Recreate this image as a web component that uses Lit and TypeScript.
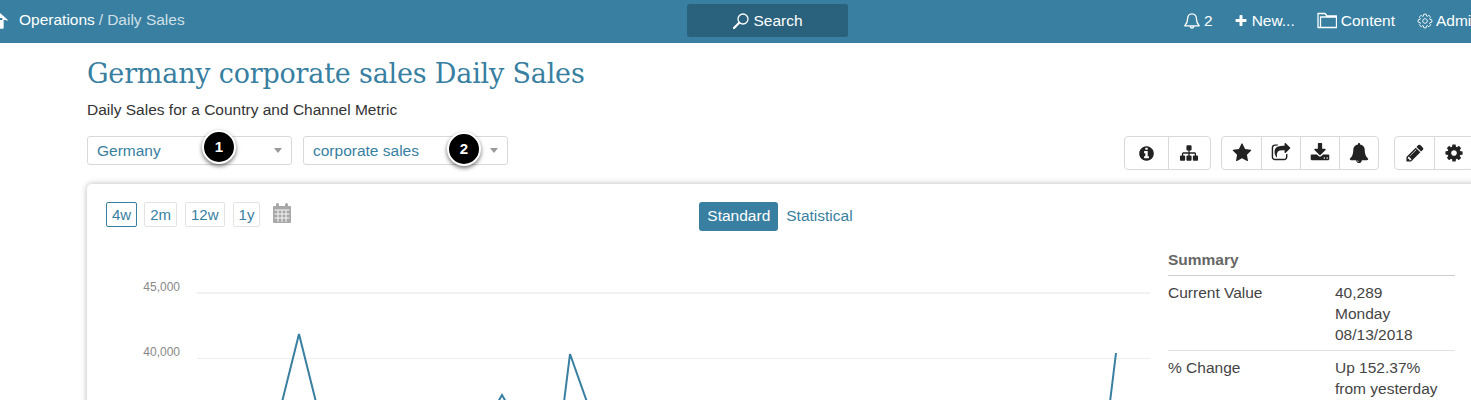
import { LitElement, html, css, svg } from "lit";
import { customElement } from "lit/decorators.js";

const fa = (d: string, size: number, cls = "") => html`<svg class="fa ${cls}" width=${size} height=${size} viewBox="0 0 1792 1792" fill="currentColor"><path d=${d}></path></svg>`;

const INFO = "M1152 1376v-160q0-14-9-23t-23-9h-96v-512q0-14-9-23t-23-9h-320q-14 0-23 9t-9 23v160q0 14 9 23t23 9h96v320h-96q-14 0-23 9t-9 23v160q0 14 9 23t23 9h448q14 0 23-9t9-23zm-128-896v-160q0-14-9-23t-23-9h-192q-14 0-23 9t-9 23v160q0 14 9 23t23 9h192q14 0 23-9t9-23zm640 416q0 209-103 385.500t-279.500 279.500-385.500 103-385.500-103-279.500-279.500-103-385.500 103-385.500 279.500-279.500 385.500-103 385.500 103 279.500 279.500 103 385.500z";
const SITEMAP = "M1792 1248v320q0 40-28 68t-68 28h-320q-40 0-68-28t-28-68v-320q0-40 28-68t68-28h96v-192h-512v192h96q40 0 68 28t28 68v320q0 40-28 68t-68 28h-320q-40 0-68-28t-28-68v-320q0-40 28-68t68-28h96v-192h-512v192h96q40 0 68 28t28 68v320q0 40-28 68t-68 28h-320q-40 0-68-28t-28-68v-320q0-40 28-68t68-28h96v-192q0-52 38-90t90-38h512v-192h-96q-40 0-68-28t-28-68v-320q0-40 28-68t68-28h320q40 0 68 28t28 68v320q0 40-28 68t-68 28h-96v192h512q52 0 90 38t38 90v192h96q40 0 68 28t28 68z";
const STAR = "M1728 647q0 22-26 48l-363 354 86 500q1 7 1 20 0 21-10.500 35.500t-30.500 14.500q-19 0-40-12l-449-236-449 236q-22 12-40 12-21 0-31.500-14.500t-10.500-35.500q0-6 2-20l86-500-364-354q-25-27-25-48 0-37 56-46l502-73 225-455q19-41 49-41t49 41l225 455 502 73q56 9 56 46z";
const SHARE = "M1472 989v259q0 119-84.500 203.500t-203.500 84.500h-832q-119 0-203.500-84.500t-84.500-203.500v-832q0-119 84.500-203.500t203.500-84.500h255q13 0 22.500 9.500t9.500 22.500q0 27-26 32-77 26-133 60-10 4-16 4h-112q-66 0-113 47t-47 113v832q0 66 47 113t113 47h832q66 0 113-47t47-113v-214q0-19 18-29 28-13 54-37 16-16 35-8 21 9 21 29zm237-496l-384 384q-18 19-45 19-12 0-25-5-39-17-39-59v-192h-160q-323 0-438 131-119 137-74 473 3 23-20 34-8 2-12 2-16 0-26-13-10-14-21-31t-39.500-68.500-49.500-99.500-38.500-114-17.500-122q0-49 3.500-91t14-90 28-88 47-81.500 68.500-74 94.500-61.500 124.500-48.500 159.500-30.500 196.500-11h160v-192q0-42 39-59 13-5 25-5 26 0 45 19l384 384q19 19 19 45t-19 45z";
const DOWNLOAD = "M1344 1344q0-26-19-45t-45-19-45 19-19 45 19 45 45 19 45-19 19-45zm256 0q0-26-19-45t-45-19-45 19-19 45 19 45 45 19 45-19 19-45zm128-224v320q0 40-28 68t-68 28h-1472q-40 0-68-28t-28-68v-320q0-40 28-68t68-28h465l135 136q58 56 136 56t136-56l136-136h464q40 0 68 28t28 68zm-325-569q17 41-14 70l-448 448q-18 19-45 19t-45-19l-448-448q-31-29-14-70 17-39 59-39h256v-448q0-26 19-45t45-19h256q26 0 45 19t19 45v448h256q42 0 59 39z";
const BELL = "M912 1696q0-16-16-16-59 0-101.500-42.500t-42.500-101.500q0-16-16-16t-16 16q0 73 51.500 124.500t124.500 51.500q16 0 16-16zm816-288q0 52-38 90t-90 38h-448q0 106-75 181t-181 75-181-75-75-181h-448q-52 0-90-38t-38-90q50-42 91-88t85-119.500 74.500-158.500 50-206 19.500-260q0-152 117-282.500t307-158.500q-8-19-8-39 0-40 28-68t68-28 68 28 28 68q0 20-8 39 190 28 307 158.500t117 282.500q0 139 19.500 260t50 206 74.500 158.500 85 119.500 91 88z";
const PENCIL = "M491 1536l91-91-235-235-91 91v107h128v128h107zm523-928q0-22-22-22-10 0-17 7l-542 542q-7 7-7 17 0 22 22 22 10 0 17-7l542-542q7-7 7-17zm-54-192l416 416-832 832h-416v-416zm683 96q0 53-37 90l-166 166-416-416 166-165q36-38 90-38 53 0 91 38l235 234q37 39 37 91z";
const COG = "M1152 896q0-106-75-181t-181-75-181 75-75 181 75 181 181 75 181-75 75-181zm512-109v222q0 12-8 23t-20 13l-185 28q-19 54-39 91 35 50 107 138 10 12 10 25t-9 23q-27 37-99 108t-94 71q-12 0-26-9l-138-108q-44 23-91 38-16 136-29 186-7 28-36 28h-222q-14 0-24.500-8.500t-11.500-21.500l-28-184q-49-16-90-37l-141 107q-10 9-25 9-14 0-25-11-126-114-165-168-7-10-7-23 0-12 8-23 15-21 51-66.500t54-70.500q-27-50-41-99l-183-27q-13-2-21-12.500t-8-23.500v-222q0-12 8-23t19-13l186-28q14-46 39-92-40-57-107-138-10-12-10-24 0-10 9-23 26-36 98.500-107.500t94.500-71.500q13 0 26 10l138 107q44-23 91-38 16-136 29-186 7-28 36-28h222q14 0 24.500 8.500t11.500 21.500l28 184q49 16 90 37l142-107q9-9 24-9 13 0 25 10 129 119 165 170 7 8 7 22 0 12-8 23-15 21-51 66.500t-54 70.500q26 50 41 98l183 28q13 2 21 12.500t8 23.500z";
const PLUS = "M1600 736v192q0 40-28 68t-68 28h-416v416q0 40-28 68t-68 28h-192q-40 0-68-28t-28-68v-416h-416q-40 0-68-28t-28-68v-192q0-40 28-68t68-28h416v-416q0-40 28-68t68-28h192q40 0 68 28t28 68v416h416q40 0 68 28t28 68z";

const stroke = (w: number, h: number, body: unknown) => html`<svg class="fa" width=${w} height=${h} viewBox="0 0 ${w} ${h}" fill="none" stroke="currentColor" stroke-width="1.300" stroke-linejoin="round" stroke-linecap="round">${body}</svg>`;

@customElement("app-root")
export class AppRoot extends LitElement {
  static styles = css`
    :host { display: block; width: 100%; height: 400px; overflow: hidden; background: #fff; font-family: "Liberation Sans", Arial, sans-serif; font-size: 15.5px; color: #333; position: relative; }
    .fa { display: block; flex: none; }
    .top { height: 43px; background: #387fa1; color: #fff; display: grid; grid-template-columns: 687px 161px 1fr; align-items: center; }
    .crumbs { display: flex; align-items: center; margin: -4px 0 0 -12px; gap: 10px; white-space: nowrap; }
    .crumbs .sep, .crumbs .cur { color: #cfe0e8; }
    .crumbs .trail { display: flex; gap: 4px; }
    .search { height: 33px; margin-top: -2px; background: #2a617c; border-radius: 3px; display: flex; align-items: center; justify-content: center; gap: 3px; }
    .nav { display: flex; align-items: center; margin: -2px 0 0 336px; white-space: nowrap; }
    .nav .it { display: flex; align-items: center; gap: 4px; margin-right: 21px; }
    .nav .it.new { gap: 4px; margin-right: 22px; }
    .nav .it.cnt { margin-right: 22px; }
    .nav .it.admin { margin-right: 0; gap: 3px; }
    .page { width: 1520px; padding-left: 87px; box-sizing: border-box; }
    h1 { margin: 0; padding-top: 13px; font: 400 27px/36px "DejaVu Serif", serif; color: #387fa1; white-space: nowrap; letter-spacing: -0.2px; }
    .sub { margin-top: 8px; line-height: 20px; color: #333; }
    .ctrls { display: flex; align-items: flex-start; margin-top: 16px; }
    .sel { width: 205px; height: 29px; box-sizing: border-box; border: 1px solid #d9d9d9; border-radius: 3px; padding: 0 9px; display: flex; align-items: center; justify-content: space-between; color: #387fa1; margin-right: 11px; }
    .caret { width: 0; height: 0; border-left: 4.5px solid transparent; border-right: 4.5px solid transparent; border-top: 5px solid #999; }
    .groups { display: flex; margin-left: 605px; }
    .grp { display: flex; height: 34px; box-sizing: border-box; border: 1px solid #d9d9d9; border-radius: 4px; margin-right: 10px; }
    .grp.last { margin-left: 5px; }
    .btn { width: 39px; box-sizing: border-box; display: flex; align-items: center; justify-content: center; border-left: 1px solid #d9d9d9; color: #222; }
    .btn:first-child { border-left: 0; }
    .grp.wide .btn { width: 42.5px; }
    .card { margin-top: 14px; width: 1430px; height: 300px; box-sizing: border-box; padding: 18px 0 0 19px; border-radius: 5px; box-shadow: 0 0 6px rgba(0,0,0,.28); background: #fff; }
    .bar { width: 1340px; display: grid; grid-template-columns: 1fr auto 1fr; height: 29px; }
    .ranges { display: flex; gap: 8px; align-items: flex-start; }
    .rng { height: 25px; box-sizing: border-box; border: 1px solid #e3e3e3; border-radius: 2px; padding: 0 5px; display: flex; align-items: center; color: #387fa1; font-size: 15px; }
    .rng.on { border-color: #387fa1; margin-right: -1px; }
    .cal { margin: 1px 0 0 5px; color: #a8a8a8; }
    .modes { display: flex; gap: 8px; align-items: center; color: #387fa1; }
    .mode { padding-bottom: 1px; }
    .mode.on { box-sizing: border-box; background: #387fa1; color: #fff; border-radius: 3px; height: 29px; padding: 0 8px 1px; display: flex; align-items: center; }
    .body { display: grid; grid-template-columns: 1044px 287px; column-gap: 18px; margin-top: 19px; }
    .chart { display: block; }
    .chart text { font: 12px "Liberation Sans", Arial, sans-serif; fill: #888; text-anchor: end; }
    .sum { color: #444; }
    .sum h3 { margin: 0; font-size: 15.5px; font-weight: 700; line-height: 20px; padding-bottom: 5px; color: #666; border-bottom: 1px solid #ccc; }
    .row { display: grid; grid-template-columns: 167px 1fr; line-height: 21px; padding: 6px 0 5px; border-bottom: 1px solid #e3e3e3; }
    .pin { position: absolute; width: 34px; height: 34px; box-sizing: border-box; border-radius: 50%; background: #000; border: 2px solid #fff; color: #fff; font-weight: 700; font-size: 15px; padding-bottom: 1px; display: flex; align-items: center; justify-content: center; box-shadow: 0 2px 4px rgba(0,0,0,.55); }
    .p1 { left: 202px; top: 130px; }
    .p2 { left: 447px; top: 132px; }
  `;

  render() {
    return html`
      <div class="top">
        <div class="crumbs">
          ${stroke(21, 20, svg`<path d="M1 10 L10 2 L19 10 M5 8 V18 H9 V12 H12 V18 H15 V8" fill="#fff" stroke="#fff"></path>`)}
          <div class="trail"><span>Operations</span><span class="sep">/</span><span class="cur">Daily Sales</span></div>
        </div>
        <div class="search">
          ${stroke(18, 18, svg`<circle cx="11" cy="7" r="5"></circle><path d="M7.2 10.800 L2 16" stroke-width="2.200"></path>`)}
          <span>Search</span>
        </div>
        <div class="nav">
          <div class="it">${stroke(16, 16, svg`<path d="M8 0.800 C4.800 0.800 3.600 3.500 3.600 5.800 C3.600 9.200 2.500 11 0.800 12.800 H15.200 C13.500 11 12.400 9.200 12.400 5.800 C12.400 3.500 11.200 0.800 8 0.800 Z M6.300 12.800 C6.300 15.800 9.700 15.800 9.700 12.800"></path>`)}<span>2</span></div>
          <div class="it new">${fa(PLUS, 14)}<span>New...</span></div>
          <div class="it cnt">${stroke(20, 18, svg`<path d="M1 15.500 V1.500 H8 L10 4 H19.500 V15.500 Z M3.500 15.500 V5 H19.500"></path>`)}<span>Content</span></div>
          <div class="it admin"><svg class="fa" width="16" height="16" viewBox="0 0 1792 1792" fill="none" stroke="currentColor" stroke-width="105"><path d=${COG}></path></svg><span>Admin</span></div>
        </div>
      </div>
      <div class="page">
        <h1>Germany corporate sales Daily Sales</h1>
        <div class="sub">Daily Sales for a Country and Channel Metric</div>
        <div class="ctrls">
          <div class="sel"><span>Germany</span><i class="caret"></i></div>
          <div class="sel"><span>corporate sales</span><i class="caret"></i></div>
          <div class="groups">
            <div class="grp wide"><div class="btn">${fa(INFO, 17)}</div><div class="btn">${fa(SITEMAP, 18)}</div></div>
            <div class="grp"><div class="btn">${fa(STAR, 20)}</div><div class="btn">${fa(SHARE, 20)}</div><div class="btn">${fa(DOWNLOAD, 20)}</div><div class="btn">${fa(BELL, 20)}</div></div>
            <div class="grp last"><div class="btn">${fa(PENCIL, 20)}</div><div class="btn">${fa(COG, 20)}</div></div>
          </div>
        </div>
        <div class="card">
          <div class="bar">
            <div class="ranges">
              <div class="rng on">4w</div><div class="rng">2m</div><div class="rng">12w</div><div class="rng">1y</div>
              <svg class="fa cal" width="18" height="20" viewBox="0 0 18 20" fill="currentColor"><path d="M1 3 H3 V1.500 a1.200 1.200 0 0 1 3 0 V3 H12 V1.500 a1.200 1.200 0 0 1 3 0 V3 H17 a1 1 0 0 1 1 1 V19 a1 1 0 0 1 -1 1 H1 a1 1 0 0 1 -1 -1 V4 a1 1 0 0 1 1 -1 Z"></path><path d="M1.500 7 H16.500 M1.500 11 H16.500 M1.500 15 H16.500 M5 7 V19 M9 7 V19 M13 7 V19" stroke="#fff" stroke-width="0.900" fill="none"></path></svg>
            </div>
            <div class="modes"><div class="mode on">Standard</div><div class="mode">Statistical</div></div>
            <div></div>
          </div>
          <div class="body">
            <svg class="chart" width="1044" height="150" viewBox="106 250 1044 150">
              <text x="180" y="291">45,000</text>
              <text x="180" y="356">40,000</text>
              <line x1="197" x2="1150" y1="293" y2="293" stroke="#eeeeee" stroke-width="1.500"></line>
              <line x1="197" x2="1150" y1="358.500" y2="358.500" stroke="#eeeeee"></line>
              <path d="M282 402 L299 334 L316 402 M498 402 L502 395 L506 402 M564 402 L570 354 L587 402 M1110 402 L1116 353" fill="none" stroke="#387fa1" stroke-width="2"></path>
            </svg>
            <div class="sum">
              <h3>Summary</h3>
              <div class="row"><div>Current Value</div><div>40,289<br />Monday<br />08/13/2018</div></div>
              <div class="row"><div>% Change</div><div>Up 152.37%<br />from yesterday</div></div>
            </div>
          </div>
        </div>
      </div>
      <div class="pin p1">1</div>
      <div class="pin p2">2</div>
    `;
  }
}
